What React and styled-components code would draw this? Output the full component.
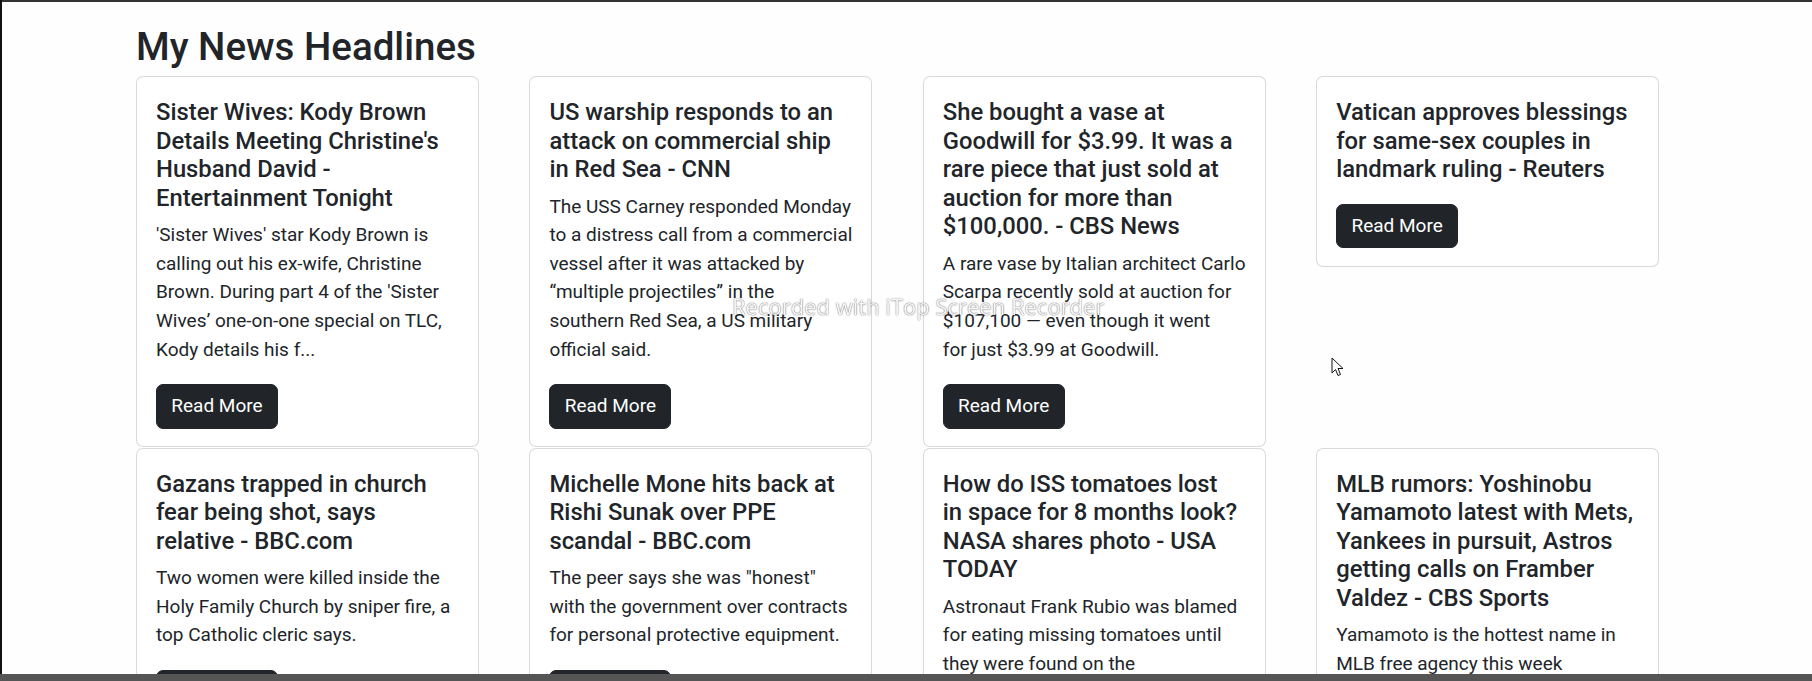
import React from "react";
import styled, { createGlobalStyle } from "styled-components";

const GlobalStyle = createGlobalStyle`
  html, body {
    margin: 0;
    padding: 0;
    background: #fefefe;
    overflow: hidden;
  }
  body {
    font-family: Roboto, "Liberation Sans", sans-serif;
    color: #212529;
  }
  * { box-sizing: border-box; }
`;

const Page = styled.main`
  padding: 24px 0 0 136px;
`;

const Heading = styled.h1`
  margin: 0 0 6px;
  font-size: 38.5px;
  line-height: 46px;
  font-weight: 500;
  color: #212529;
`;

const Grid = styled.div`
  display: grid;
  grid-template-columns: repeat(4, 343px);
  column-gap: 50.4px;
  row-gap: 0.5px;
  align-items: start;
`;

const Card = styled.article`
  border: 1px solid rgba(0, 0, 0, 0.15);
  border-radius: 7px;
  background: #fff;
  padding: 21px 19px 17.5px;
`;

const Title = styled.h5`
  margin: 0 0 9px;
  font-size: 23.8px;
  line-height: 28.56px;
  font-weight: 500;
  color: #212529;
`;

const Text = styled.p`
  margin: 0 0 20px;
  font-size: 19px;
  line-height: 28.56px;
  font-weight: 400;
  color: #212529;
`;

const Button = styled.a`
  display: inline-block;
  background: #212529;
  color: #fff;
  border: 1px solid #212529;
  border-radius: 7px;
  padding: 7px 14.3px;
  font-size: 19px;
  line-height: 28.56px;
  text-decoration: none;
`;

const TopEdge = styled.div`
  position: fixed;
  top: 0;
  left: 0;
  right: 0;
  height: 2px;
  background: #333;
`;

const LeftEdge = styled.div`
  position: fixed;
  top: 0;
  bottom: 0;
  left: 0;
  width: 2px;
  background: #111;
`;

const BottomBar = styled.div`
  position: fixed;
  left: 0;
  right: 0;
  bottom: 0;
  height: 7px;
  background: #555;
`;

const Watermark = styled.div`
  position: fixed;
  left: 732px;
  top: 292px;
  font-family: "Open Sans", sans-serif;
  font-size: 22px;
  line-height: 28px;
  color: rgba(255, 255, 255, 0.95);
  text-shadow: 0 0 1px rgba(0, 0, 0, 0.6), 0 0 2px rgba(0, 0, 0, 0.35);
  white-space: nowrap;
  pointer-events: none;
`;

const Cursor = styled.svg`
  position: fixed;
  left: 1331px;
  top: 357px;
`;

const NB = "\u00a0";

const articles = [
  {
    title: "Sister Wives: Kody Brown Details Meeting Christine's Husband David - Entertainment Tonight",
    text: "'Sister Wives' star Kody Brown is calling out his ex-wife, Christine Brown. During part 4 of the 'Sister Wives\u2019 one-on-one special on TLC, Kody details his f...",
  },
  {
    title: "US warship responds to an attack on commercial ship in Red Sea - CNN",
    text: "The USS Carney responded Monday to a distress call from a commercial vessel after it was attacked by \u201cmultiple projectiles\u201d in the southern Red Sea, a US military official said.",
  },
  {
    title: "She bought a vase at Goodwill for $3.99. It was a rare piece that just sold at auction for more than $100,000. - CBS News",
    text: `A rare vase by Italian architect Carlo Scarpa recently sold at auction for $107,100 \u2014 even though it went for${NB}just $3.99 at Goodwill.`,
  },
  {
    title: "Vatican approves blessings for same-sex couples in landmark ruling - Reuters",
    text: "",
  },
  {
    title: "Gazans trapped in church fear being shot, says relative - BBC.com",
    text: "Two women were killed inside the Holy Family Church by sniper fire, a top Catholic cleric says.",
  },
  {
    title: "Michelle Mone hits back at Rishi Sunak over PPE scandal - BBC.com",
    text: "The peer says she was \"honest\" with the government over contracts for personal protective equipment.",
  },
  {
    title: `How do ISS tomatoes lost in${NB}space for 8 months look? NASA shares photo - USA TODAY`,
    text: "Astronaut Frank Rubio was blamed for eating missing tomatoes until they were found on the International Space Station months later.",
  },
  {
    title: "MLB rumors: Yoshinobu Yamamoto latest with Mets, Yankees in pursuit, Astros getting calls on Framber Valdez - CBS Sports",
    text: "Yamamoto is the hottest name in MLB free agency this week",
  },
];

export default function App() {
  return (
    <>
      <GlobalStyle />
      <Page>
        <Heading>My News Headlines</Heading>
        <Grid>
          {articles.map((a, i) => (
            <Card key={i}>
              <Title>{a.title}</Title>
              <Text>{a.text}</Text>
              <Button href="#">Read More</Button>
            </Card>
          ))}
        </Grid>
      </Page>
      <Watermark>Recorded with iTop Screen Recorder</Watermark>
      <Cursor width="13" height="20" viewBox="0 0 13 20">
        <path d="M1 1 L1 16 L4.5 12.5 L7 18.5 L9.5 17.5 L7 11.5 L12 11.5 Z" fill="#fff" stroke="#111" strokeWidth="1" strokeLinejoin="round" />
      </Cursor>
      <TopEdge />
      <LeftEdge />
      <BottomBar />
    </>
  );
}
